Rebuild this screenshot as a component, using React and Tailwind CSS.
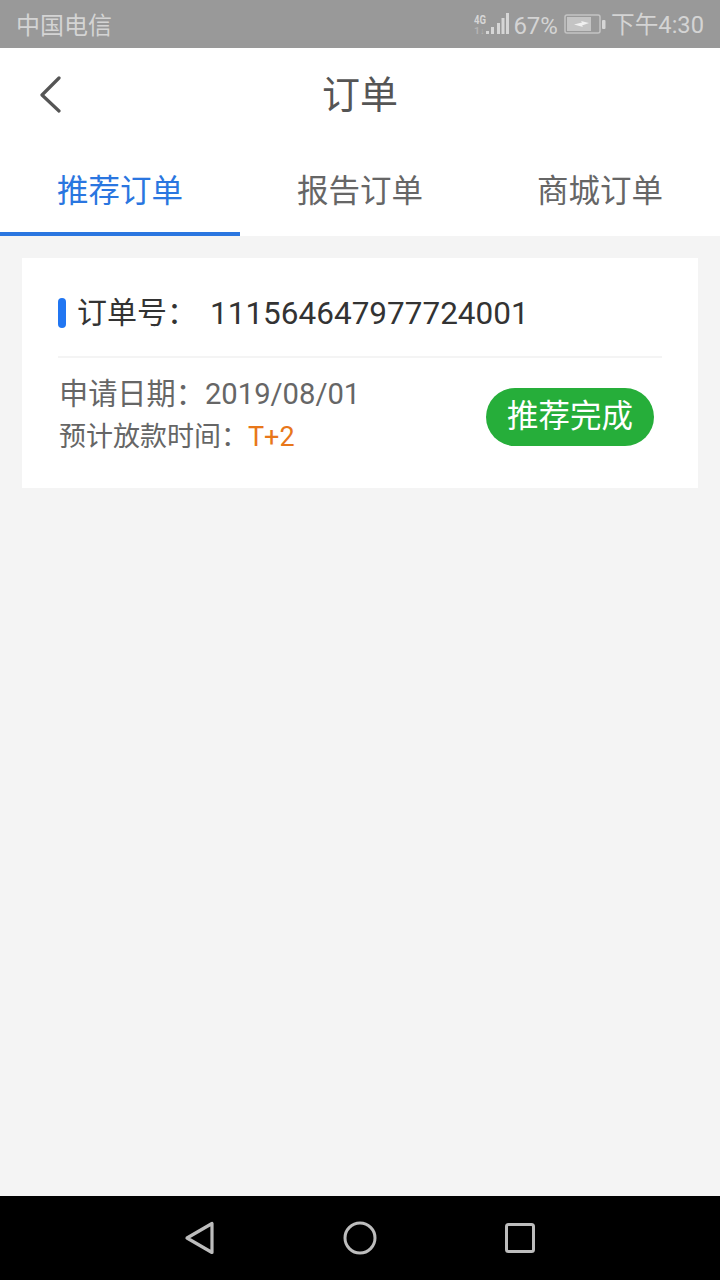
const font = { fontFamily: 'Roboto, "Noto Sans CJK SC", sans-serif' };

function StatusIcons() {
  return (
    <svg width="40" height="26" viewBox="0 0 40 26" className="shrink-0">
      <text x="1" y="13" fontSize="13" fontWeight="700" fill="#d6d6d6" fontFamily="Roboto, sans-serif" textLength="12" lengthAdjust="spacingAndGlyphs">4G</text>
      <text x="1" y="23" fontSize="9" fontWeight="700" fill="#b4b4b4" fontFamily="Roboto, sans-serif" textLength="11" lengthAdjust="spacingAndGlyphs">1↓</text>
      <rect x="13" y="20" width="3" height="3" fill="#d6d6d6" />
      <rect x="18" y="16" width="3" height="7" fill="#d6d6d6" />
      <rect x="24" y="12" width="3" height="11" fill="#d6d6d6" />
      <rect x="28.5" y="7" width="3" height="16" fill="#d6d6d6" />
      <rect x="33" y="2" width="3" height="21" fill="#d6d6d6" />
    </svg>
  );
}

function Battery() {
  return (
    <svg width="42" height="22" viewBox="0 0 42 22" className="shrink-0">
      <rect x="1" y="2" width="35" height="18" rx="2" fill="none" stroke="#c4c4c4" strokeWidth="1.5" />
      <rect x="3" y="4" width="24" height="14" fill="#c4c4c4" />
      <path d="M10 11.5 L18 9.5 L17 8 L25 10 L18 12.5 L19 14 Z" fill="#f0f0f0" />
      <rect x="38" y="7" width="3.5" height="9" rx="1" fill="#d6d6d6" />
    </svg>
  );
}

function Tab({ label, active }) {
  return (
    <div className={`flex-1 h-full flex items-center justify-center border-b-4 ${active ? 'border-[#2a76e0] text-[#2a76e0]' : 'border-transparent text-[#666666]'}`}>
      <span className="text-[31.5px] leading-none pt-3">{label}</span>
    </div>
  );
}

export default function App() {
  return (
    <div style={font} className="w-[720px] h-[1280px] flex flex-col bg-[#f4f4f4] overflow-hidden">
      <div className="h-12 shrink-0 bg-[#999999] flex items-center justify-between pl-4 pr-4 text-[#d4d4d4]">
        <span className="text-[24px] leading-none pt-1">中国电信</span>
        <div className="flex items-center">
          <StatusIcons />
          <span className="text-[24px] leading-none pt-1">67%</span>
          <span className="ml-1.5 flex"><Battery /></span>
          <span className="text-[23.7px] leading-none ml-[5px] pt-1">下午4:30</span>
        </div>
      </div>

      <div className="h-[92px] shrink-0 bg-white flex items-center relative justify-center">
        <svg width="24" height="38" viewBox="0 0 24 38" className="absolute left-[39px] top-[28px]">
          <path d="M20 2 L3 19 L20 35" fill="none" stroke="#555555" strokeWidth="3.2" strokeLinecap="round" strokeLinejoin="round" />
        </svg>
        <span className="text-[38px] leading-none text-[#555555] pt-0.5">订单</span>
      </div>

      <div className="h-24 shrink-0 bg-white flex items-stretch">
        <Tab label="推荐订单" active />
        <Tab label="报告订单" />
        <Tab label="商城订单" />
      </div>

      <div className="flex-1 px-[22px] pt-[22px]">
        <div className="h-[230px] bg-white px-9 flex flex-col">
          <div className="h-[100px] shrink-0 border-b-2 border-[#f4f4f4] flex items-center pt-[11px]">
            <div className="w-2 h-[30px] rounded-full bg-[#2176f2]" />
            <span className="ml-[11px] text-[30px] leading-none text-[#333333]">订单号：</span>
            <span className="ml-[13px] text-[31.5px] leading-none text-[#333333] pt-0.5">111564647977724001</span>
          </div>
          <div className="flex-1 flex items-center justify-between pb-3">
            <div className="flex flex-col gap-[14px] text-[#666666] pb-1 pl-px">
              <span className="text-[29.2px] leading-[30px]">申请日期：2019/08/01</span>
              <span className="text-[27px] leading-[28px]">预计放款时间：<span className="text-[#e8771a]">T+2</span></span>
            </div>
            <div className="w-[168px] h-[58px] mr-2 rounded-full bg-[#26ae3a] text-white flex items-center justify-center text-[31.5px] leading-none">推荐完成</div>
          </div>
        </div>
      </div>

      <div className="h-[84px] shrink-0 bg-black flex items-center justify-center gap-[127px] pr-0.5">
        <svg width="32" height="34" viewBox="0 0 32 34">
          <path d="M28 2.5 L28 31.5 L3 17 Z" fill="none" stroke="#bdbdbd" strokeWidth="3.2" strokeLinejoin="round" />
        </svg>
        <svg width="34" height="34" viewBox="0 0 34 34">
          <circle cx="17" cy="17" r="15" fill="none" stroke="#bdbdbd" strokeWidth="3" />
        </svg>
        <svg width="30" height="30" viewBox="0 0 30 30" className="ml-px">
          <rect x="1.5" y="1.5" width="27" height="27" rx="2" fill="none" stroke="#bdbdbd" strokeWidth="3" />
        </svg>
      </div>
    </div>
  );
}
